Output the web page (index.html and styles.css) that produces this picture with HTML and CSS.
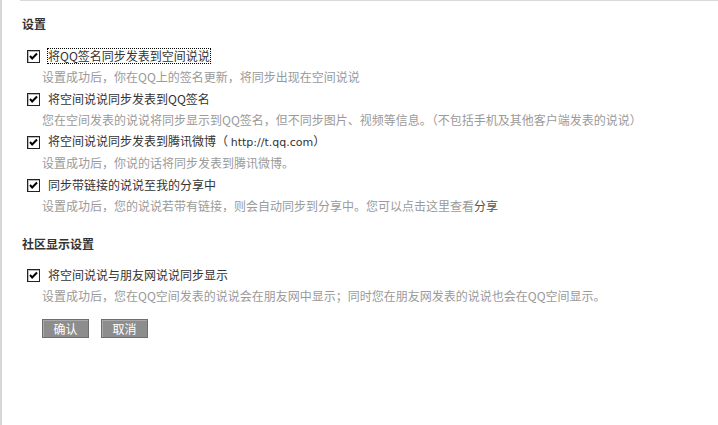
FILE: index.html
```html
<!DOCTYPE html>
<html>
<head>
<meta http-equiv="Content-Type" content="text/html; charset=utf-8" />
<title>说说同步设置</title>
<link rel="stylesheet" href="styles.css">
</head>
<body>
 <div id="frame">
  <div class="panel">
   <h3 class="title">设置</h3>
   <ul class="opts">
    <li>
     <div class="row"><span class="chk"><svg width="11" height="11" viewBox="0 0 11 11"><path d="M2 5 L4.2 7.5 L9 2.5" fill="none" stroke="#000" stroke-width="2"/></svg></span><span class="lab focus">将QQ签名同步发表到空间说说</span></div>
     <p class="tip">设置成功后，你在QQ上的签名更新，将同步出现在空间说说</p>
    </li>
    <li>
     <div class="row"><span class="chk"><svg width="11" height="11" viewBox="0 0 11 11"><path d="M2 5 L4.2 7.5 L9 2.5" fill="none" stroke="#000" stroke-width="2"/></svg></span><span class="lab">将空间说说同步发表到QQ签名</span></div>
     <p class="tip">您在空间发表的说说将同步显示到QQ签名，但不同步图片、视频等信息。（不包括手机及其他客户端发表的说说）</p>
    </li>
    <li>
     <div class="row"><span class="chk"><svg width="11" height="11" viewBox="0 0 11 11"><path d="M2 5 L4.2 7.5 L9 2.5" fill="none" stroke="#000" stroke-width="2"/></svg></span><span class="lab">将空间说说同步发表到腾讯微博（ <span class="en">http://t.qq.com</span>）</span></div>
     <p class="tip">设置成功后，你说的话将同步发表到腾讯微博。</p>
    </li>
    <li>
     <div class="row"><span class="chk"><svg width="11" height="11" viewBox="0 0 11 11"><path d="M2 5 L4.2 7.5 L9 2.5" fill="none" stroke="#000" stroke-width="2"/></svg></span><span class="lab">同步带链接的说说至我的分享中</span></div>
     <p class="tip">设置成功后，您的说说若带有链接，则会自动同步到分享中。您可以点击这里查看<a href="#" class="lnk">分享</a></p>
    </li>
   </ul>

   <h3 class="title t2">社区显示设置</h3>
   <ul class="opts o2">
    <li>
     <div class="row"><span class="chk"><svg width="11" height="11" viewBox="0 0 11 11"><path d="M2 5 L4.2 7.5 L9 2.5" fill="none" stroke="#000" stroke-width="2"/></svg></span><span class="lab">将空间说说与朋友网说说同步显示</span></div>
     <p class="tip">设置成功后，您在QQ空间发表的说说会在朋友网中显示；同时您在朋友网发表的说说也会在QQ空间显示。</p>
    </li>
   </ul>

   <div class="btns">
    <span class="btn">确认</span>
    <span class="btn">取消</span>
   </div>
  </div>
 </div>
</body>
</html>
```

FILE: styles.css
```css
*{
	margin:0;
	padding:0;
}
body{
	font-family:"Noto Sans CJK SC","Liberation Sans",sans-serif;
	font-size:12px;
	color:#333;
	background:#fff;
}
#frame{
	height:425px;
	border-left:2px solid #d6d6d6;
	overflow:hidden;
}
.panel{
	margin-left:18px;
	padding:13px 0 0 2px;
	border-top:1px solid #d9d9d9;
}
.title{
	font-size:12px;
	font-weight:bold;
	line-height:20px;
	color:#333;
}
.t2{
	margin-top:18px;
}
.opts{
	list-style:none;
	margin-top:12px;
}
.o2{
	margin-top:11px;
}
.opts li{
	margin-bottom:2px;
}
.row{
	display:flex;
	align-items:center;
	height:20px;
	padding-left:5px;
}
.chk{
	display:flex;
	align-items:center;
	justify-content:center;
	width:11px;
	height:11px;
	border:1px solid #222;
	box-shadow:inset 1px 1px 0 #bbb;
	background:#fff;
	margin-right:8px;
}
.lab{
	color:#333;
	line-height:14px;
}
.focus{
	outline:1px dotted #000;
	outline-offset:0;
}
.en{
	font-family:"DejaVu Sans","Liberation Sans",sans-serif;
	font-size:11px;
}
.tip{
	line-height:20px;
	padding-left:20px;
	color:#9a9a9a;
	margin-top:1px;
}
.lnk{
	color:#5e5246;
	text-decoration:none;
}
.btns{
	display:flex;
	gap:12px;
	padding-left:20px;
	margin-top:13px;
}
.btn{
	display:inline-block;
	width:45px;
	height:17px;
	line-height:17px;
	text-align:center;
	color:#fff;
	background:#8d8d8d;
	border:1px solid #6e6e6e;
	box-shadow:inset 1px 1px 0 #a9a9a9;
	cursor:pointer;
}
```
